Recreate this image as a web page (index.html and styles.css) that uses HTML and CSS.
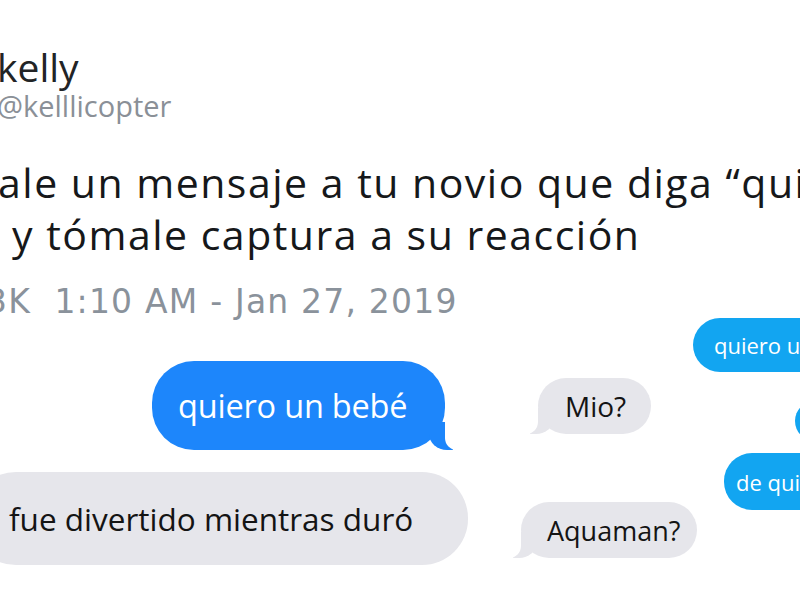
FILE: index.html
```html
<!DOCTYPE html>
<html lang="es">
<head>
<meta charset="utf-8">
<title>kelly</title>
<link rel="stylesheet" href="styles.css">
</head>
<body>
<div class="page">
  <header class="tweet">
    <div class="name">kelly</div>
    <div class="handle">@kelllicopter</div>
    <div class="text">
      <div class="line line1">ale un mensaje a tu novio que diga “qui</div>
      <div class="line line2">y tómale captura a su reacción</div>
    </div>
    <div class="meta">3K&nbsp; 1:10 AM - Jan 27, 2019</div>
  </header>
  <section class="collage">
    <div class="bubble imsg sent b-bebe">quiero un bebé</div>
    <div class="bubble imsg recv b-fue">fue divertido mientras duró</div>
    <div class="bubble imsg recv b-mio">Mio?</div>
    <div class="bubble imsg recv b-aqua">Aquaman?</div>
    <div class="bubble msgr b-quiero2">quiero un bebé</div>
    <div class="bubble msgr b-small"></div>
    <div class="bubble msgr b-dequi">de quién?</div>
  </section>
</div>
</body>
</html>
```

FILE: styles.css
```css
html, body {
  margin: 0;
  padding: 0;
  background: #ffffff;
}
.page {
  width: 800px;
  height: 600px;
  overflow: hidden;
  position: relative;
  font-family: "Open Sans", "Noto Sans", sans-serif;
}
.tweet {
  padding-top: 44px;
}
.name {
  font-size: 39px;
  line-height: 46px;
  color: #222426;
  margin-left: -3px;
}
.handle {
  font-size: 29px;
  line-height: 32px;
  color: #8a9097;
  margin-left: -3px;
}
.text {
  margin-top: 34px;
  color: #16181a;
  font-size: 41px;
  line-height: 52px;
  letter-spacing: 1.5px;
}
.line {
  white-space: nowrap;
}
.line1 {
  margin-left: -2px;
}
.line2 {
  margin-left: 12px;
}
.meta {
  margin-top: 22px;
  margin-left: -14px;
  font-family: "DejaVu Sans", sans-serif;
  font-size: 33px;
  line-height: 40px;
  letter-spacing: 1.2px;
  color: #8a929b;
  white-space: pre;
}
.collage {
  position: absolute;
  left: 0;
  top: 0;
  width: 800px;
  height: 600px;
}
.bubble {
  position: absolute;
  display: flex;
  align-items: center;
  box-sizing: border-box;
  white-space: nowrap;
}
.imsg.sent {
  background: #1d86fb;
  color: #ffffff;
}
.imsg.recv {
  background: #e6e6eb;
  color: #141414;
}
.sent::before,
.sent::after,
.recv::before,
.recv::after {
  content: "";
  position: absolute;
  bottom: 0;
}
.sent::before {
  right: -8px;
  width: 24px;
  height: 28px;
  background: #1d86fb;
  border-bottom-left-radius: 18px 16px;
}
.sent::after {
  right: -30px;
  width: 30px;
  height: 30px;
  background: #ffffff;
  border-bottom-left-radius: 12px;
}
.recv::before {
  left: -8px;
  width: 24px;
  height: 26px;
  background: #e6e6eb;
  border-bottom-right-radius: 18px 16px;
}
.recv::after {
  left: -30px;
  width: 30px;
  height: 28px;
  background: #ffffff;
  border-bottom-right-radius: 12px;
}
.b-bebe {
  left: 152px;
  top: 361px;
  width: 293px;
  height: 89px;
  border-radius: 42px;
  padding-left: 26px;
  font-size: 32.5px;
  letter-spacing: -0.2px;
}
.b-fue {
  left: -30px;
  top: 472px;
  width: 498px;
  height: 93px;
  border-radius: 46px;
  padding-left: 39px;
  font-size: 31.5px;
}
.b-fue::before,
.b-fue::after {
  display: none;
}
.b-mio {
  left: 538px;
  top: 378px;
  width: 113px;
  height: 56px;
  border-radius: 28px;
  padding-left: 27px;
  font-size: 28px;
}
.b-aqua {
  left: 521px;
  top: 502px;
  width: 176px;
  height: 56px;
  border-radius: 28px;
  padding-left: 26px;
  font-size: 27px;
}
.msgr {
  background: #12a5f1;
  color: #ffffff;
  font-size: 22px;
}
.b-quiero2 {
  left: 693px;
  top: 318px;
  width: 170px;
  height: 54px;
  border-radius: 27px;
  padding-left: 21px;
}
.b-small {
  left: 795px;
  top: 401px;
  width: 40px;
  height: 40px;
  border-radius: 20px;
}
.b-dequi {
  left: 724px;
  top: 453px;
  width: 140px;
  height: 57px;
  border-radius: 28px;
  padding-left: 12px;
}
```
